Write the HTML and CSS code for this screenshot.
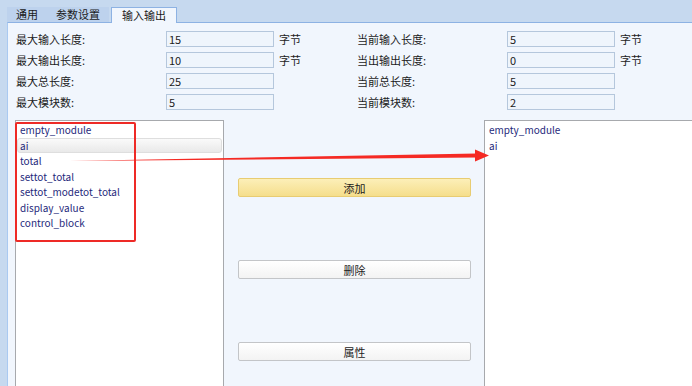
FILE: index.html
```html
<!DOCTYPE html>
<html lang="zh">
<head>
  <meta charset="UTF-8" />
  <title>输入输出</title>
  <link rel="stylesheet" href="styles.css">
</head>
<body>
  <div class="window">
    <div class="tabs">
      <div class="tab">通用</div>
      <div class="tab">参数设置</div>
      <div class="tab active">输入输出</div>
    </div>

    <div class="panel">
      <div class="form">
        <div class="label">最大输入长度:</div>
        <div class="field">15</div>
        <div class="unit">字节</div>
        <div class="label">当前输入长度:</div>
        <div class="field">5</div>
        <div class="unit">字节</div>

        <div class="label">最大输出长度:</div>
        <div class="field">10</div>
        <div class="unit">字节</div>
        <div class="label">当出输出长度:</div>
        <div class="field">0</div>
        <div class="unit">字节</div>

        <div class="label">最大总长度:</div>
        <div class="field">25</div>
        <div class="unit"></div>
        <div class="label">当前总长度:</div>
        <div class="field">5</div>
        <div class="unit"></div>

        <div class="label">最大模块数:</div>
        <div class="field">5</div>
        <div class="unit"></div>
        <div class="label">当前模块数:</div>
        <div class="field">2</div>
        <div class="unit"></div>
      </div>

      <div class="lists">
        <ul class="module-list left-list">
          <li>empty_module</li>
          <li class="selected">ai</li>
          <li>total</li>
          <li>settot_total</li>
          <li>settot_modetot_total</li>
          <li>display_value</li>
          <li>control_block</li>
        </ul>

        <div class="actions">
          <button class="btn btn-add">添加</button>
          <button class="btn">删除</button>
          <button class="btn">属性</button>
        </div>

        <ul class="module-list right-list">
          <li>empty_module</li>
          <li>ai</li>
        </ul>
      </div>
    </div>
  </div>

  <!-- annotation overlay -->
  <div class="mark-box"></div>
  <svg class="mark-arrow" width="692" height="386" viewBox="0 0 692 386">
    <polygon points="70,161 477,153.5 477,157.5" fill="#f52a24" />
    <polygon points="475,149.5 489,155.5 475,161.5" fill="#f52a24" />
  </svg>
</body>
</html>
```

FILE: styles.css
```css
* {
  margin: 0;
  padding: 0;
  box-sizing: border-box;
}

html, body {
  height: 100%;
  overflow: hidden;
}

body {
  background: #c6d9ef;
  font-family: "Noto Sans CJK SC", "Noto Sans", sans-serif;
  font-size: 11px;
  color: #1b1b1b;
  position: relative;
}

.window {
  height: 100%;
  padding-left: 7px;
  display: flex;
  flex-direction: column;
}

/* === Tabs === */
.tabs {
  display: flex;
  padding-top: 7px;
  height: 23px;
  margin-bottom: -1px;
  position: relative;
  z-index: 1;
}

.tab {
  height: 15px;
  line-height: 15px;
  padding: 0 9px;
  background: #bdd2ed;
  color: #1a1a1a;
}

.tab.active {
  background: #f1f6fd;
  border: 1px solid #8db2e3;
  border-bottom: none;
  height: 16px;
  line-height: 14px;
  padding: 0 10px;
  margin-left: 2px;
}

/* === Panel === */
.panel {
  flex: 1;
  background: #f1f6fd;
  border-top: 1px solid #8db2e3;
  border-left: 1px solid #a9c9f1;
  padding-top: 8px;
  display: flex;
  flex-direction: column;
  overflow: hidden;
}

.form {
  display: grid;
  grid-template-columns: 150px 108px 83px 150px 108px 1fr;
  grid-auto-rows: 21px;
  padding-left: 8px;
}

.label,
.unit {
  line-height: 16px;
  white-space: nowrap;
}

.unit {
  padding-left: 5px;
}

.field {
  height: 16px;
  line-height: 14px;
  border: 1px solid #b5c7dc;
  background: #eff5fc;
  padding-left: 2px;
}

/* === Lists === */
.lists {
  flex: 1;
  display: flex;
  margin-top: 5px;
  padding-left: 7px;
}

.module-list {
  list-style: none;
  background: #fff;
  border: 1px solid #a7a9ad;
  border-bottom: none;
  padding: 1px 1px 0;
  color: #1f2a7c;
  font-size: 10px;
}

.left-list {
  width: 209px;
}

.right-list {
  flex: 1;
  border-right: none;
}

.module-list li {
  height: 15.5px;
  line-height: 15px;
  padding-left: 3px;
  white-space: nowrap;
}

.module-list li.selected {
  background: linear-gradient(#fafafa, #e9e9e9);
  border: 1px solid #dedede;
  border-radius: 3px;
  line-height: 13px;
  padding-left: 2px;
}

.actions {
  width: 260px;
  display: flex;
  flex-direction: column;
  gap: 63px;
  padding: 58px 13px 0 14px;
}

.btn {
  height: 19px;
  font-family: inherit;
  font-size: 11px;
  color: #1b1b1b;
  border: 1px solid #c3c5c8;
  border-radius: 2px;
  background: linear-gradient(#ffffff, #f3f3f3);
}

.btn-add {
  border-color: #e8cc72;
  background: linear-gradient(#fcefb8, #f5de8c);
}

/* === Annotation overlay === */
.mark-box {
  position: absolute;
  left: 15px;
  top: 122px;
  width: 121px;
  height: 120px;
  border: 2px solid #ee2a26;
  border-radius: 2px;
}

.mark-arrow {
  position: absolute;
  left: 0;
  top: 0;
  pointer-events: none;
}
```
